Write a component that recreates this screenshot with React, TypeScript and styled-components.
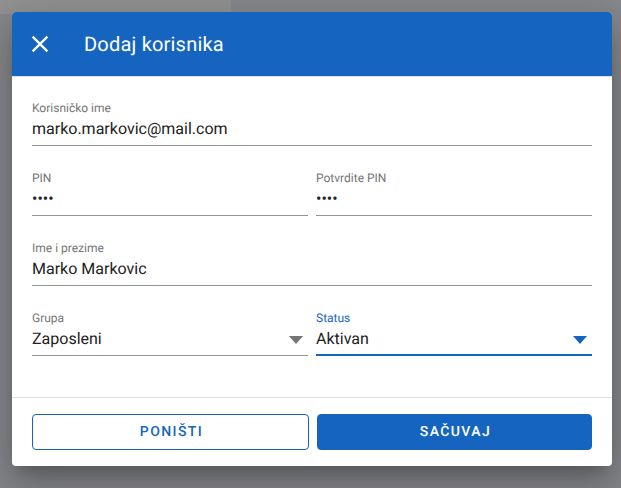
import React from 'react';
import styled, { createGlobalStyle } from 'styled-components';

const GlobalStyle = createGlobalStyle`
  html, body {
    margin: 0;
    height: 100%;
    overflow: hidden;
    background: #87888c;
    font-family: Roboto, "Liberation Sans", sans-serif;
    text-rendering: geometricPrecision;
  }
`;

const Screen = styled.div`
  position: relative;
  width: 621px;
  height: 488px;
  padding: 12px 9px 0 12px;
  box-sizing: border-box;
`;

// page behind the overlay, only its top bar shows
const BackdropBar = styled.div`
  position: absolute;
  left: 0;
  top: 0;
  width: 231px;
  height: 14px;
  background: #929292;
`;

const Dialog = styled.div`
  position: relative;
  width: 600px;
  height: 454px;
  display: flex;
  flex-direction: column;
  background: #fff;
  border-radius: 4px;
  overflow: hidden;
  box-shadow: 0 11px 15px -7px rgba(0, 0, 0, 0.2), 0 24px 38px 3px rgba(0, 0, 0, 0.14),
    0 9px 46px 8px rgba(0, 0, 0, 0.12);
`;

const Header = styled.header`
  height: 64px;
  flex: none;
  display: flex;
  align-items: center;
  padding-left: 14px;
  gap: 30px;
  background: #1565c0;
  color: #fff;
`;

const CloseIcon = styled.svg`
  width: 28px;
  height: 28px;
  fill: #fff;
  display: block;
`;

const Title = styled.h2`
  margin: 0;
  font-size: 20px;
  font-weight: 400;
  letter-spacing: 0.2px;
  line-height: 24px;
`;

const Form = styled.div`
  flex: 1;
  display: flex;
  flex-direction: column;
  gap: 24px;
  padding: 23px 20px 0;
  border-top: 1px solid #e0e0e0;
`;

const Row = styled.div`
  display: grid;
  grid-template-columns: ${props => (props.$split ? '276px 276px' : '1fr')};
  gap: 8px;
`;

const Field = styled.div`
  height: 46px;
  box-sizing: border-box;
  position: relative;
  padding-top: 1px;
  border-bottom: ${props => (props.$focused ? '2px solid #1565c0' : '1px solid #949494')};
`;

const Label = styled.label`
  display: block;
  font-size: 12px;
  line-height: 14px;
  color: ${props => (props.$focused ? '#1565c0' : '#757575')};
`;

const Value = styled.div`
  margin-top: 2px;
  font-size: 16px;
  line-height: 24px;
  color: #212121;
`;

const Arrow = styled.svg`
  position: absolute;
  right: 5px;
  top: 26px;
  width: 14px;
  height: 8px;
  fill: ${props => (props.$focused ? '#1565c0' : '#757575')};
`;

const Footer = styled.footer`
  height: 69px;
  flex: none;
  box-sizing: border-box;
  border-top: 1px solid #e0e0e0;
  padding: 16px 20px;
  display: grid;
  grid-template-columns: 277px 275px;
  gap: 8px;
`;

const Button = styled.button`
  height: 36px;
  box-sizing: border-box;
  border-radius: 4px;
  border: 1px solid #1565c0;
  background: ${props => (props.$primary ? '#1565c0' : '#fff')};
  color: ${props => (props.$primary ? '#fff' : '#1565c0')};
  font-family: Roboto, sans-serif;
  font-size: 14px;
  font-weight: 500;
  letter-spacing: 1.4px;
  text-transform: uppercase;
  text-rendering: geometricPrecision;
  padding: 0 0 0 2px;
`;

const SelectArrow = ({ focused }: { focused?: boolean }) => (
  <Arrow $focused={focused} viewBox="0 0 14 8">
    <path d="M0 0h14L7 8z" />
  </Arrow>
);

const App: React.FC = () => {
  return (
    <Screen>
      <GlobalStyle />
      <BackdropBar />
      <Dialog>
        <Header>
          <CloseIcon viewBox="0 0 24 24">
            <path d="M19 6.41 17.59 5 12 10.59 6.41 5 5 6.41 10.59 12 5 17.59 6.41 19 12 13.41 17.59 19 19 17.59 13.41 12z" />
          </CloseIcon>
          <Title>Dodaj korisnika</Title>
        </Header>
        <Form>
          <Row>
            <Field>
              <Label>Korisničko ime</Label>
              <Value>marko.markovic@mail.com</Value>
            </Field>
          </Row>
          <Row $split>
            <Field>
              <Label>PIN</Label>
              <Value>••••</Value>
            </Field>
            <Field>
              <Label>Potvrdite PIN</Label>
              <Value>••••</Value>
            </Field>
          </Row>
          <Row>
            <Field>
              <Label>Ime i prezime</Label>
              <Value>Marko Markovic</Value>
            </Field>
          </Row>
          <Row $split>
            <Field>
              <Label>Grupa</Label>
              <Value>Zaposleni</Value>
              <SelectArrow />
            </Field>
            <Field $focused>
              <Label $focused>Status</Label>
              <Value>Aktivan</Value>
              <SelectArrow focused />
            </Field>
          </Row>
        </Form>
        <Footer>
          <Button>Poništi</Button>
          <Button $primary>Sačuvaj</Button>
        </Footer>
      </Dialog>
    </Screen>
  );
};

export default App;
